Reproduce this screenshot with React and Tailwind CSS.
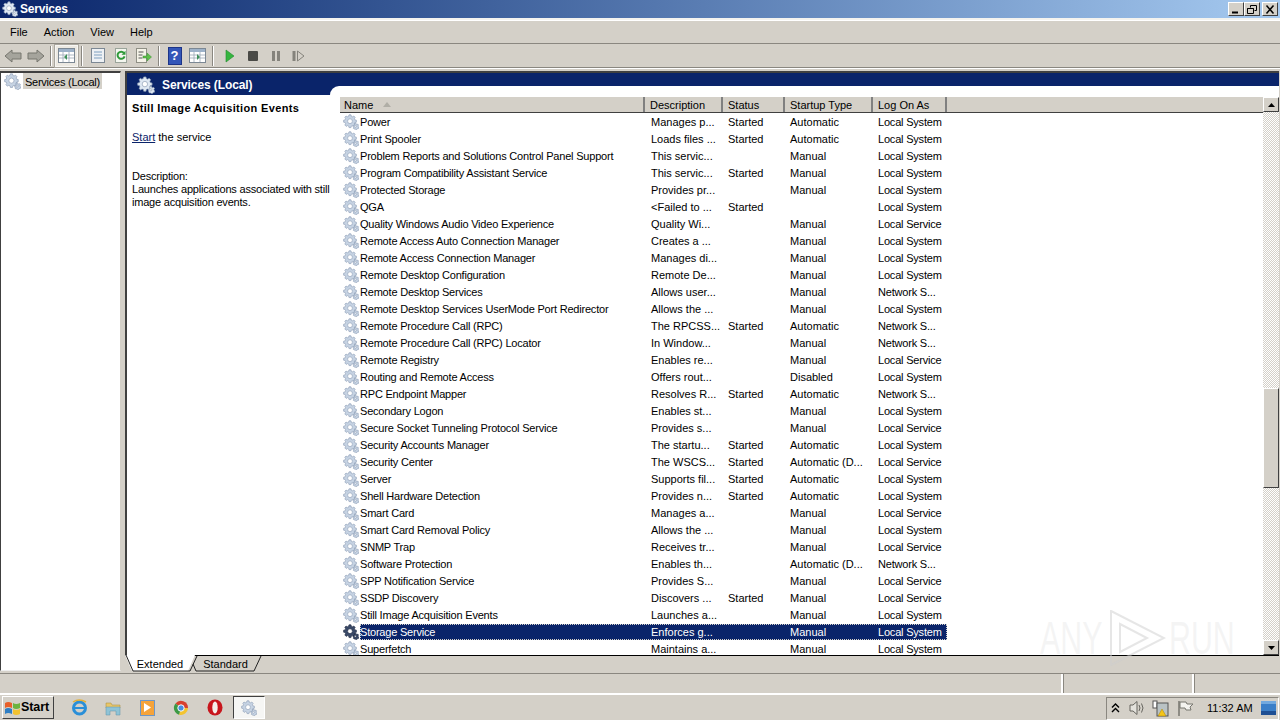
const rows = [
  ['Power', 'Manages p...', 'Started', 'Automatic', 'Local System'],
  ['Print Spooler', 'Loads files ...', 'Started', 'Automatic', 'Local System'],
  ['Problem Reports and Solutions Control Panel Support', 'This servic...', '', 'Manual', 'Local System'],
  ['Program Compatibility Assistant Service', 'This servic...', 'Started', 'Manual', 'Local System'],
  ['Protected Storage', 'Provides pr...', '', 'Manual', 'Local System'],
  ['QGA', '<Failed to ...', 'Started', '', 'Local System'],
  ['Quality Windows Audio Video Experience', 'Quality Wi...', '', 'Manual', 'Local Service'],
  ['Remote Access Auto Connection Manager', 'Creates a ...', '', 'Manual', 'Local System'],
  ['Remote Access Connection Manager', 'Manages di...', '', 'Manual', 'Local System'],
  ['Remote Desktop Configuration', 'Remote De...', '', 'Manual', 'Local System'],
  ['Remote Desktop Services', 'Allows user...', '', 'Manual', 'Network S...'],
  ['Remote Desktop Services UserMode Port Redirector', 'Allows the ...', '', 'Manual', 'Local System'],
  ['Remote Procedure Call (RPC)', 'The RPCSS...', 'Started', 'Automatic', 'Network S...'],
  ['Remote Procedure Call (RPC) Locator', 'In Window...', '', 'Manual', 'Network S...'],
  ['Remote Registry', 'Enables re...', '', 'Manual', 'Local Service'],
  ['Routing and Remote Access', 'Offers rout...', '', 'Disabled', 'Local System'],
  ['RPC Endpoint Mapper', 'Resolves R...', 'Started', 'Automatic', 'Network S...'],
  ['Secondary Logon', 'Enables st...', '', 'Manual', 'Local System'],
  ['Secure Socket Tunneling Protocol Service', 'Provides s...', '', 'Manual', 'Local Service'],
  ['Security Accounts Manager', 'The startu...', 'Started', 'Automatic', 'Local System'],
  ['Security Center', 'The WSCS...', 'Started', 'Automatic (D...', 'Local Service'],
  ['Server', 'Supports fil...', 'Started', 'Automatic', 'Local System'],
  ['Shell Hardware Detection', 'Provides n...', 'Started', 'Automatic', 'Local System'],
  ['Smart Card', 'Manages a...', '', 'Manual', 'Local Service'],
  ['Smart Card Removal Policy', 'Allows the ...', '', 'Manual', 'Local System'],
  ['SNMP Trap', 'Receives tr...', '', 'Manual', 'Local Service'],
  ['Software Protection', 'Enables th...', '', 'Automatic (D...', 'Network S...'],
  ['SPP Notification Service', 'Provides S...', '', 'Manual', 'Local Service'],
  ['SSDP Discovery', 'Discovers ...', 'Started', 'Manual', 'Local Service'],
  ['Still Image Acquisition Events', 'Launches a...', '', 'Manual', 'Local System'],
  ['Storage Service', 'Enforces g...', '', 'Manual', 'Local System'],
  ['Superfetch', 'Maintains a...', '', 'Manual', 'Local System'],
];

function Gear({ size = 16, dark = false, light = false }) {
  const body = dark ? '#3a4a68' : light ? '#dfe8f3' : '#c6d3e3';
  const edge = dark ? '#1c2740' : '#8a9bb3';
  return (
    <svg width={size} height={size} viewBox="0 0 16 16" className="shrink-0">
      <g stroke={edge} strokeWidth="0.6" fill={body}>
        <path d="M6 0.8h2l.3 1.5 1.2.5 1.3-.8 1.4 1.4-.8 1.3.5 1.2 1.5.3v2l-1.5.3-.5 1.2.8 1.3-1.4 1.4-1.3-.8-1.2.5-.3 1.5H6l-.3-1.5-1.2-.5-1.3.8-1.4-1.4.8-1.3-.5-1.2L.6 8.2v-2l1.500-.3.5-1.2-.8-1.3 1.2-1.4 1.3.8 1.2-.5z" />
        <circle cx="7" cy="7.2" r="2.4" fill="#fff" />
        <path d="M11.5 9.2h1.4l.2.9.8.4.9-.4.8 1-.6.8.2.9.6.4-.3 1.2-.9.1-.5.8-1.3.3-.7-.6-.9 0-.9-.7.2-.9-.5-.8.5-1.2.8-.2z" />
        <circle cx="12.3" cy="12.3" r="1" fill="#fff" />
      </g>
    </svg>
  );
}

function ToolBtn({ children, className = '' }) {
  return <div className={`w-[23px] h-[22px] flex items-center justify-center shrink-0 ${className}`}>{children}</div>;
}

function Sep() {
  return <div className="w-[2px] h-[20px] mx-[3px] border-l border-[#8a8780] border-r-white shrink-0 border-r" />;
}

function Arrow({ flip }) {
  return (
    <svg width="18" height="16" viewBox="0 0 18 16" className={flip ? 'scale-x-[-1]' : ''}>
      <path d="M1 8 8 2v3h9v6H8v3z" fill="#a5a49c" stroke="#77766f" />
    </svg>
  );
}

function PanelIcon({ side }) {
  return (
    <svg width="17" height="17" viewBox="0 0 17 17">
      <rect x="0.5" y="1.5" width="16" height="14" fill="#fff" stroke="#7c8894" />
      <rect x="1" y="2" width="15" height="3" fill="#9db2c9" />
      <path d="M1 8h15M1 11h15M5 5v10M11 5v10" stroke="#9aa7b5" strokeWidth="0.8" />
      <path d={side === 'left' ? 'M9 7 6 10l3 3z' : 'M8 7l3 3-3 3z'} fill="#3f8f5a" />
    </svg>
  );
}

function Toolbar() {
  return (
    <div className="h-[24px] flex items-center pl-[1px] border-b border-[#8a8780] bg-[#d4d0c8]">
      <ToolBtn><Arrow /></ToolBtn>
      <ToolBtn><Arrow flip /></ToolBtn>
      <Sep />
      <ToolBtn className="bg-[#ece9e2] border border-[#f7f6f3] outline outline-[#a9a69e]"><PanelIcon side="left" /></ToolBtn>
      <Sep />
      <ToolBtn>
        <svg width="16" height="17" viewBox="0 0 16 17">
          <rect x="1.5" y="1.5" width="13" height="14" fill="#eef1f4" stroke="#7c8894" />
          <path d="M4 5h8M4 8h8M4 11h8" stroke="#7fa0c0" />
        </svg>
      </ToolBtn>
      <ToolBtn>
        <svg width="16" height="17" viewBox="0 0 16 17">
          <rect x="2.5" y="1.5" width="11" height="14" fill="#f4f6ef" stroke="#9aa49a" />
          <path d="M11 6a3.6 3.6 0 1 0 .6 3.4" fill="none" stroke="#2f9a3a" strokeWidth="2" />
          <path d="M12.5 3.8v4h-4z" fill="#2f9a3a" />
        </svg>
      </ToolBtn>
      <ToolBtn>
        <svg width="17" height="17" viewBox="0 0 17 17">
          <rect x="1.5" y="1.5" width="10" height="14" fill="#f5f3e8" stroke="#8f8f85" />
          <path d="M3.5 5h5M3.5 8h4M3.5 11h4" stroke="#555" />
          <path d="M8 9h4V6l4.5 4-4.5 4v-3H8z" fill="#5fc04a" stroke="#3b8f32" strokeWidth="0.5" />
        </svg>
      </ToolBtn>
      <Sep />
      <ToolBtn>
        <div className="w-[14px] h-[18px] bg-[#3356b8] border border-[#1d3488] flex items-center justify-center text-white text-[13px] font-bold leading-none">?</div>
      </ToolBtn>
      <ToolBtn><PanelIcon side="right" /></ToolBtn>
      <Sep />
      <ToolBtn className="ml-[1px]">
        <svg width="12" height="14" viewBox="0 0 12 14"><path d="M2 1v12l8-6z" fill="#35b53f" stroke="#1f8a2c" strokeWidth="0.6" /></svg>
      </ToolBtn>
      <ToolBtn><div className="w-[10px] h-[10px] bg-[#4a4a46] rounded-[1px]" /></ToolBtn>
      <ToolBtn>
        <div className="flex gap-[2px]">
          <div className="w-[3px] h-[10px] bg-[#85837c]" />
          <div className="w-[3px] h-[10px] bg-[#85837c]" />
        </div>
      </ToolBtn>
      <ToolBtn>
        <svg width="13" height="12" viewBox="0 0 13 12">
          <rect x="0.5" y="1" width="3" height="10" fill="#85837c" />
          <path d="M5.5 1v10l6.5-5z" fill="#d4d0c8" stroke="#85837c" />
        </svg>
      </ToolBtn>
    </div>
  );
}

function ScrollBtn({ up }) {
  return (
    <div className="w-[16px] h-[15px] bg-[#d4d0c8] border border-t-white border-l-white border-r-[#404040] border-b-[#404040] flex items-center justify-center shrink-0">
      <svg width="7" height="4" viewBox="0 0 7 4"><path d={up ? 'M3.5 0 7 4H0z' : 'M0 0h7L3.5 4z'} fill="#000" /></svg>
    </div>
  );
}

function HeadCell({ w, children }) {
  return (
    <div className={`${w} h-full pt-[2px] flex items-center border-r-2 border-r-[#808080] shrink-0 overflow-hidden`}>
      {children}
    </div>
  );
}

function ServiceRow({ r, selected }) {
  return (
    <div className="h-[17px] flex items-center shrink-0">
      <div className="w-[20px] pl-[3px] shrink-0 flex">
        <Gear size={16} dark={selected} />
      </div>
      <div className={`w-[587px] shrink-0 flex h-[16px] items-center ${selected ? 'bg-[#0a246a] text-white outline-1 -outline-offset-1 outline-dotted outline-[#d4d0c8]' : ''}`}>
        <div className="w-[285px] pt-[2px] shrink-0 whitespace-nowrap tracking-[-0.2px]">{r[0]}</div>
        <div className="w-[78px] pt-[2px] shrink-0 pl-[6px] whitespace-nowrap">{r[1]}</div>
        <div className="w-[62px] pt-[2px] shrink-0 pl-[5px] whitespace-nowrap">{r[2]}</div>
        <div className="w-[88px] pt-[2px] shrink-0 pl-[5px] whitespace-nowrap">{r[3]}</div>
        <div className="w-[74px] pt-[2px] shrink-0 pl-[5px] whitespace-nowrap tracking-[-0.2px]">{r[4]}</div>
      </div>
    </div>
  );
}

function ServiceList() {
  return (
    <div className="flex-1 min-w-0 flex overflow-hidden">
      <div className="flex-1 min-w-0 flex flex-col overflow-hidden">
        <div className="h-[16px] flex bg-[#d4d0c8] border-b border-[#404040] shrink-0">
          <HeadCell w="w-[305px] pl-[4px]">
            Name
            <svg width="8" height="5" viewBox="0 0 8 5" className="ml-[10px] mb-[2px]"><path d="M4 0 8 5H0z" fill="#b0aea6" /></svg>
          </HeadCell>
          <HeadCell w="w-[78px] pl-[5px]">Description</HeadCell>
          <HeadCell w="w-[62px] pl-[5px]">Status</HeadCell>
          <HeadCell w="w-[88px] pl-[5px]">Startup Type</HeadCell>
          <HeadCell w="w-[74px] pl-[5px]">Log On As</HeadCell>
        </div>
        <div className="flex flex-col overflow-hidden flex-1">
          {rows.map((r) => <ServiceRow key={r[0]} r={r} selected={r[0] === 'Storage Service'} />)}
        </div>
      </div>
      <div className="w-[16px] shrink-0 flex flex-col bg-[repeating-conic-gradient(#d4d0c8_0_25%,#ffffff_0_50%)] bg-[length:2px_2px]">
        <ScrollBtn up />
        <div className="h-[276px] shrink-0" />
        <div className="h-[100px] shrink-0 bg-[#d4d0c8] border border-t-white border-l-white border-r-[#404040] border-b-[#404040]" />
        <div className="flex-1" />
        <ScrollBtn />
      </div>
    </div>
  );
}

function Tray() {
  return (
    <div className="w-[173px] h-[23px] mt-[1px] mr-[1px] flex items-center border border-t-[#8a8780] border-l-[#8a8780] border-b-white border-r-white">
      <span className="w-[18px] text-center text-[9px] font-bold leading-none">
        <svg width="9" height="10" viewBox="0 0 9 10" className="ml-[4px]"><path d="M1 4.5 4.5 1 8 4.5M1 9l3.5-3.500L8 9" fill="none" stroke="#000" strokeWidth="1.4" /></svg>
      </span>
      <svg width="18" height="16" viewBox="0 0 18 16" className="ml-[3px]">
        <path d="M2 5h3l4-3.500v13L5 11H2z" fill="#e4e2dc" stroke="#66655f" />
        <path d="M11 5q2 3 0 6M13.500 3.500q3 4.500 0 9" fill="none" stroke="#66655f" />
      </svg>
      <svg width="17" height="17" viewBox="0 0 17 17" className="ml-[6px]">
        <rect x="1" y="1" width="4" height="7" fill="#fff" stroke="#555" />
        <rect x="5" y="3" width="11" height="13" fill="#b9c2c4" stroke="#555" />
        <path d="M10 9 14 16H6z" fill="#f5c518" stroke="#a8830a" strokeWidth="0.5" />
      </svg>
      <svg width="17" height="17" viewBox="0 0 17 17" className="ml-[8px]">
        <path d="M2 1v15" stroke="#77766f" strokeWidth="1.500" />
        <path d="M3 2h6l1 2h6l-3 3 1 3H9L8 8H3z" fill="#f4f3ef" stroke="#77766f" />
      </svg>
      <span className="ml-[13px] whitespace-nowrap">11:32 AM</span>
      <svg width="15" height="14" viewBox="0 0 15 14" className="ml-[8px]">
        <rect width="15" height="14" fill="#3b7fc8" />
        <rect y="10" width="15" height="4" fill="#1e4f94" />
        <rect x="0" y="0" width="15" height="3" fill="#72a9df" />
      </svg>
    </div>
  );
}

function TaskIcon({ children, className = '' }) {
  return <div className={`w-[34px] flex items-center justify-center shrink-0 ${className}`}>{children}</div>;
}

function Taskbar() {
  return (
    <div className="h-[27px] flex items-center bg-[#d4d0c8] border-t-2 border-t-white shrink-0">
      <div className="ml-[2px] w-[52px] h-[23px] bg-[#d4d0c8] border border-t-white border-l-white border-r-[#404040] border-b-[#404040] flex items-center pl-[1px] font-bold text-[12.5px] shrink-0">
        <svg width="17" height="16" viewBox="0 0 17 16" className="shrink-0">
          <path d="M1 3q3-2 7 0v5q-4-2-7 0z" fill="#e8602a" />
          <path d="M9 3q3 2 7 0v5q-4 2-7 0z" fill="#6cb33f" />
          <path d="M1 9q3-2 7 0v5q-4-2-7 0z" fill="#2e7ec4" />
          <path d="M9 9q3 2 7 0v5q-4 2-7 0z" fill="#f2c230" />
        </svg>
        <span className="tracking-[-0.1px]">Start</span>
      </div>
      <div className="flex items-center ml-[8px]">
        <TaskIcon>
          <svg width="17" height="18" viewBox="0 0 17 18">
            <circle cx="8.500" cy="9" r="6" fill="none" stroke="#2a8fd8" strokeWidth="3" />
            <path d="M3 9h11" stroke="#2a8fd8" strokeWidth="2" />
            <path d="M2 3q6-4 13 0" fill="none" stroke="#e3b03a" strokeWidth="1.500" />
          </svg>
        </TaskIcon>
        <TaskIcon>
          <svg width="16" height="16" viewBox="0 0 16 16">
            <path d="M1 3h5l1 2h8v3H1z" fill="#e8c66a" stroke="#a98a35" strokeWidth="0.5" />
            <path d="M1 7h14v8h-4v-4H5v4H1z" fill="#8fc3d6" stroke="#5d93a8" strokeWidth="0.5" />
          </svg>
        </TaskIcon>
        <TaskIcon>
          <div className="w-[15px] h-[16px] bg-[#f5a33a] border border-[#6d97c8] flex items-center justify-center">
            <svg width="8" height="9" viewBox="0 0 8 9"><path d="M1 0v9l7-4.500z" fill="#fff" /></svg>
          </div>
        </TaskIcon>
        <TaskIcon>
          <svg width="16" height="16" viewBox="0 0 16 16">
            <path d="M8 8 2.500 3.500A7 7 0 0 1 15 8z" fill="#d8412f" />
            <path d="M8 8 15 8a7 7 0 0 1-9 6.700z" fill="#f4c430" />
            <path d="M8 8 6 14.700A7 7 0 0 1 2.500 3.500z" fill="#3d9a45" />
            <circle cx="8" cy="8" r="3.200" fill="#4a8fe0" stroke="#fff" />
          </svg>
        </TaskIcon>
        <TaskIcon>
          <svg width="16" height="17" viewBox="0 0 16 17">
            <ellipse cx="8" cy="8.500" rx="7.500" ry="8" fill="#c8161d" />
            <ellipse cx="8" cy="8.500" rx="2.700" ry="6" fill="#f4f0ea" />
          </svg>
        </TaskIcon>
        <div className="w-[32px] h-[23px] ml-[1px] bg-[#f6f6f4] border border-t-[#404040] border-l-[#404040] border-b-white border-r-white flex items-center justify-center shrink-0">
          <Gear size={16} />
        </div>
      </div>
      <div className="flex-1" />
      <Tray />
    </div>
  );
}

function Watermark() {
  return (
    <div className="absolute left-[1040px] top-[610px] h-[56px] flex items-center text-[46px] leading-none text-[rgba(225,225,225,0.35)] pointer-events-none font-['Liberation_Sans',sans-serif]">
      <span className="w-[68px] inline-block origin-left scale-x-[0.66] whitespace-nowrap">ANY</span>
      <svg width="58" height="56" viewBox="0 0 58 56" className="shrink-0">
        <path d="M3 1 56 28 3 55zM12 14v28l27-14z" fill="none" stroke="rgba(205,205,205,0.5)" strokeWidth="2" />
      </svg>
      <span className="w-[62px] ml-[3px] inline-block origin-left scale-x-[0.66] whitespace-nowrap">RUN</span>
    </div>
  );
}

export default function App() {
  return (
    <div className="relative w-[1280px] h-[720px] overflow-hidden flex flex-col bg-[#d4d0c8] text-black text-[11px] leading-none font-['Liberation_Sans',sans-serif]">
      <div className="h-[18px] flex items-center bg-gradient-to-r from-[#0a246a] to-[#a6caf0] shrink-0 pl-[2px] pr-[2px]">
        <Gear size={16} light />
        <span className="ml-[2px] pb-[1px] text-white font-bold text-[12px] tracking-[-0.2px]">Services</span>
        <div className="flex-1" />
        {['min', 'max', 'close'].map((b) => (
          <div key={b} className={`w-[16px] h-[14px] bg-[#d4d0c8] border border-t-white border-l-white border-r-[#404040] border-b-[#404040] flex items-center justify-center ${b === 'close' ? 'ml-[2px]' : ''}`}>
            <svg width="10" height="9" viewBox="0 0 10 9">
              {b === 'min' && <path d="M1 7.500h6" stroke="#000" strokeWidth="2" />}
              {b === 'max' && <path d="M3.500 2.500V.5h6v5h-2M.5 3.500h6v5h-6zM.5 3.500h6" fill="none" stroke="#000" />}
              {b === 'close' && <path d="m1.500.5 7 8m0-8-7 8" stroke="#000" strokeWidth="1.500" />}
            </svg>
          </div>
        ))}
      </div>
      <div className="h-[2px] bg-[#f4f3ef] shrink-0" />
      <div className="h-[24px] flex items-center bg-[#d4d0c8] border-b border-b-[#8a8780] border-t border-t-white shrink-0 pl-[2px]">
        {['File', 'Action', 'View', 'Help'].map((m) => (
          <span key={m} className="px-[8px]">{m}</span>
        ))}
      </div>
      <Toolbar />
      <div className="h-[3px] bg-[#d4d0c8] border-t border-white shrink-0" />

      <div className="flex flex-1 min-h-0 bg-[#d4d0c8]">
        <div className="w-[121px] mb-[2px] shrink-0 bg-white border-l border-t-2 border-l-[#404040] border-t-[#404040] border-r border-r-[#d4d0c8] border-b border-b-[#eeeeee] flex items-start pl-[3px]">
          <Gear size={17} />
          <span className="ml-[2px] h-[16px] pt-[2px] px-[2px] flex items-center bg-[#d4d0c8] tracking-[-0.25px]">Services (Local)</span>
        </div>
        <div className="w-[4px] shrink-0" />
        <div className="flex-1 min-w-0 flex flex-col mr-[1px]">
          <div className="flex-1 min-h-0 flex flex-col border-l-2 border-t-2 border-l-[#404040] border-t-[#404040] bg-white relative">
            <div className="h-[13px] bg-[#0a246a] shrink-0 flex" />
            <div className="flex flex-1 min-h-0">
              <div className="w-[213px] shrink-0 flex flex-col">
                <div className="h-[9px] bg-[#0a246a] shrink-0" />
                <div className="pl-[5px] pr-[4px]">
                  <div className="font-bold h-[13px] mt-[7px] flex items-center whitespace-nowrap tracking-[0.35px]">Still Image Acquisition Events</div>
                  <div className="mt-[16px] h-[13px] flex items-center whitespace-pre"><span className="text-[#0a246a] underline">Start</span> the service</div>
                  <div className="mt-[26px] leading-[13px] tracking-[-0.2px]">Description:<br />Launches applications associated with still image acquisition events.</div>
                </div>
              </div>
              <div className="flex-1 min-w-0 flex flex-col">
                <div className="h-[11px] shrink-0" />
                <ServiceList />
              </div>
            </div>
            <div className="absolute left-[6px] top-[0px] h-[23px] flex items-center pl-[4px]">
              <Gear size={18} light />
              <span className="ml-[7px] text-white font-bold text-[12px] tracking-[-0.1px]">Services (Local)</span>
            </div>
            <div className="absolute left-[203px] top-[13px] w-[10px] h-[9px] bg-white rounded-tl-[10px]" />
          </div>
          <div className="h-[18px] shrink-0 flex items-start border-t border-t-[#000000] relative">
            <div className="h-[16px] w-[70px] pt-[2px] bg-white -mt-[1px] flex items-center justify-center [clip-path:polygon(0_0,100%_0,90%_100%,10%_100%)] z-10">Extended</div>
            <div className="h-[16px] w-[67px] pt-[1px] ml-[-3px] flex items-center justify-center">Standard</div>
            <svg width="142" height="17" viewBox="0 0 142 17" className="absolute left-0 top-[-1px] z-20">
              <path d="M1 0 8 16H65L72 1M68 9l3 7H129L136 1" fill="none" stroke="#222" />
            </svg>
          </div>
        </div>
      </div>

      <div className="h-[20px] flex shrink-0 bg-[#d4d0c8] border-t border-t-[#8a8780]">
        <div className="flex-1 border-r-2 border-r-white" />
        <div className="w-[131px] border-l border-l-[#8a8780] border-r-2 border-r-white" />
        <div className="w-[86px] border-l border-l-[#8a8780]" />
      </div>
      <Taskbar />
      <Watermark />
    </div>
  );
}
